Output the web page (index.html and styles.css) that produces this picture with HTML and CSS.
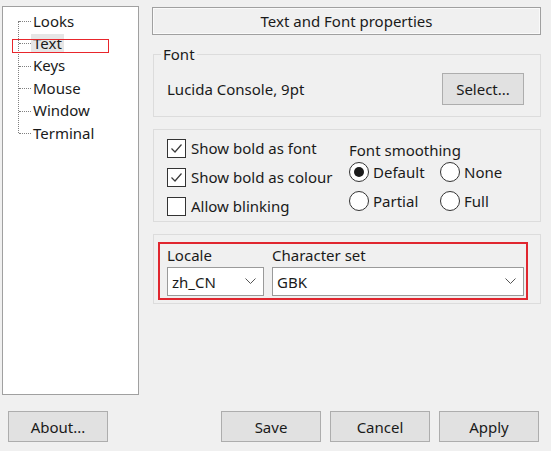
FILE: index.html
```html
<!DOCTYPE html>
<html>
<head>
<meta charset="utf-8">
<link rel="stylesheet" href="styles.css">
</head>
<body>
<div class="window">
  <div class="main">
    <div class="tree">
      <ul class="tree-list">
        <li><span class="node">Looks</span></li>
        <li><span class="node selected">Text</span></li>
        <li><span class="node">Keys</span></li>
        <li><span class="node">Mouse</span></li>
        <li><span class="node">Window</span></li>
        <li><span class="node">Terminal</span></li>
      </ul>
      <div class="mark"></div>
    </div>
    <div class="panel">
      <div class="title">Text and Font properties</div>
      <fieldset class="group font-group">
        <legend>Font</legend>
        <div class="font-row">
          <span>Lucida Console, 9pt</span>
          <button class="btn select">Select...</button>
        </div>
      </fieldset>
      <div class="group opts">
        <div class="checks">
          <div class="check"><span class="box"><svg width="17" height="17" viewBox="0 0 17 17"><path d="M3.5 8.5 L7 12 L13.5 4.5" fill="none" stroke="#3a3a3a" stroke-width="1.2"/></svg></span>Show bold as font</div>
          <div class="check"><span class="box"><svg width="17" height="17" viewBox="0 0 17 17"><path d="M3.5 8.5 L7 12 L13.5 4.5" fill="none" stroke="#3a3a3a" stroke-width="1.2"/></svg></span>Show bold as colour</div>
          <div class="check"><span class="box"></span>Allow blinking</div>
        </div>
        <div class="smoothing">
          <div class="sm-label">Font smoothing</div>
          <div class="radios">
            <div class="radio"><span class="circle on"></span>Default</div>
            <div class="radio"><span class="circle"></span>None</div>
            <div class="radio"><span class="circle"></span>Partial</div>
            <div class="radio"><span class="circle"></span>Full</div>
          </div>
        </div>
      </div>
      <div class="group locale-group">
        <div class="highlight">
          <div class="field locale">
            <div class="flabel">Locale</div>
            <div class="combo"><span>zh_CN</span><svg width="11" height="7" viewBox="0 0 11 7"><path d="M0.5 0.5 L5.5 5.5 L10.5 0.5" fill="none" stroke="#555" stroke-width="1"/></svg></div>
          </div>
          <div class="field charset">
            <div class="flabel">Character set</div>
            <div class="combo"><span>GBK</span><svg width="11" height="7" viewBox="0 0 11 7"><path d="M0.5 0.5 L5.5 5.5 L10.5 0.5" fill="none" stroke="#555" stroke-width="1"/></svg></div>
          </div>
        </div>
      </div>
    </div>
  </div>
  <div class="footer">
    <button class="btn fbtn">About...</button>
    <div class="actions">
      <button class="btn fbtn">Save</button>
      <button class="btn fbtn">Cancel</button>
      <button class="btn fbtn">Apply</button>
    </div>
  </div>
</div>
</body>
</html>
```
FILE: styles.css
```css
* { box-sizing: border-box; }
body {
  margin: 0;
  background: #f0f0f0;
  font-family: "Noto Sans", "Open Sans", sans-serif;
  font-size: 15px;
  color: #1a1a1a;
}
.window {
  width: 551px;
  height: 451px;
  padding: 6px 10px 0 2px;
}
.main {
  display: flex;
  gap: 13px;
  height: 389px;
}
.tree {
  width: 137px;
  background: #fff;
  border: 1px solid #a0a0a0;
  position: relative;
  padding-top: 3px;
}
.tree-list {
  list-style: none;
  margin: 0;
  padding: 0;
  position: relative;
}
.tree-list::before {
  content: "";
  position: absolute;
  left: 15px;
  top: 11px;
  bottom: 11px;
  border-left: 1px dotted #808080;
}
.tree-list li {
  height: 22.4px;
  display: flex;
  align-items: center;
  padding-left: 28px;
  position: relative;
}
.tree-list li::before {
  content: "";
  position: absolute;
  left: 16px;
  width: 12px;
  top: 11px;
  border-top: 1px dotted #808080;
}
.node {
  padding: 0 2px;
  line-height: 19px;
}
.node.selected { background: #e6e6e6; }
.mark {
  position: absolute;
  left: 9px;
  top: 32px;
  width: 97px;
  height: 14px;
  border: 1px solid #e8262c;
}
.panel {
  width: 389px;
  display: flex;
  flex-direction: column;
}
.title {
  margin-top: 1px;
  height: 28px;
  border: 1px solid #a0a0a0;
  box-shadow: inset 0 0 0 1px #fafafa;
  text-align: center;
  line-height: 26px;
}
.group {
  border: 1px solid #dcdcdc;
  margin: 0 0 0 1px;
  width: 388px;
}
.font-group {
  margin-top: 9px;
  padding: 9px 16px 11px 13px;
  min-width: 0;
}
.font-group legend {
  padding: 0 2px;
  margin-left: -6px;
  line-height: 20px;
}
.font-row {
  display: flex;
  justify-content: space-between;
  align-items: center;
}
.btn {
  background: #e1e1e1;
  border: 1px solid #adadad;
  font: inherit;
  color: inherit;
  padding: 0;
}
.select { width: 82px; height: 32px; }
.opts {
  margin-top: 12px;
  height: 93px;
  display: flex;
  padding: 8px 0 0 13px;
}
.checks {
  display: flex;
  flex-direction: column;
  gap: 9px;
  width: 182px;
}
.check {
  display: flex;
  align-items: center;
  height: 20px;
  gap: 5px;
  white-space: nowrap;
}
.box {
  width: 19px;
  height: 19px;
  border: 1px solid #333;
  background: #fff;
  display: flex;
  align-items: center;
  justify-content: center;
}
.smoothing { margin-top: 2px; }
.sm-label { line-height: 20px; }
.radios {
  margin-top: 2px;
  display: grid;
  grid-template-columns: 91px 91px;
  row-gap: 9px;
}
.radio {
  display: flex;
  align-items: center;
  gap: 4px;
  height: 20px;
}
.circle {
  width: 20px;
  height: 20px;
  border-radius: 50%;
  border: 1px solid #333;
  background: #fff;
  display: flex;
  align-items: center;
  justify-content: center;
}
.circle.on::after {
  content: "";
  width: 10px;
  height: 10px;
  border-radius: 50%;
  background: #1a1a1a;
}
.locale-group {
  margin-top: 12px;
  height: 70px;
  padding: 7px 0 0 4px;
}
.highlight {
  width: 370px;
  height: 58px;
  border: 2px solid #e0262f;
  display: flex;
  gap: 8px;
  padding: 1px 2px 0 7px;
}
.field { display: flex; flex-direction: column; }
.locale { width: 97px; }
.charset { width: 252px; }
.flabel { line-height: 20px; }
.combo {
  margin-top: 2px;
  height: 29px;
  border: 1px solid #9a9a9a;
  background: #fff;
  display: flex;
  align-items: center;
  justify-content: space-between;
  padding: 0 7px 0 4px;
}
.footer {
  margin-top: 16px;
  display: flex;
  justify-content: space-between;
  padding: 0 2px 0 6px;
}
.actions { display: flex; gap: 9px; }
.fbtn { width: 100px; height: 31px; }
```
